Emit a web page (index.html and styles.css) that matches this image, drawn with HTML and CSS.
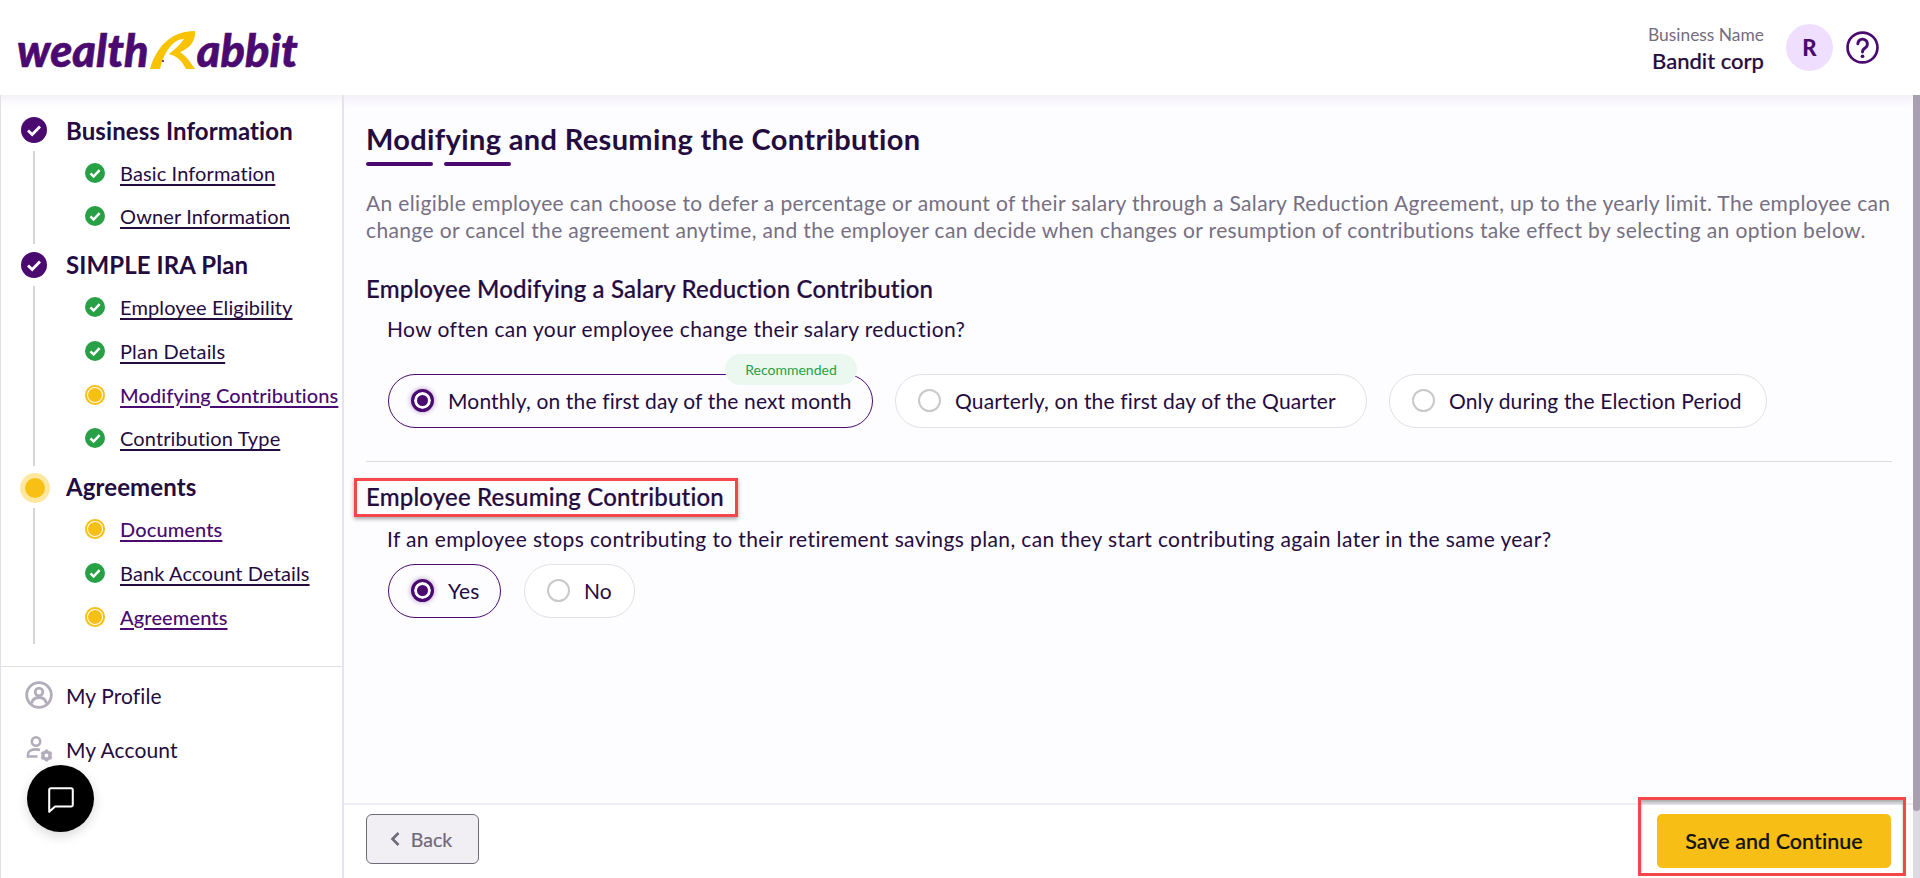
FILE: index.html
```html
<!DOCTYPE html>
<html lang="en">
<head>
<meta charset="utf-8">
<title>WealthRabbit</title>
<link rel="stylesheet" href="styles.css">
</head>
<body>
<div class="page">
  <header class="topbar">
    <div class="logo">
      <span class="logo-word">wealth</span>
      <svg class="logo-r" viewBox="0 0 48 40"><path d="M1 39C7 18 21 1 46 1C47 11 40 19 31 22C37 26 42 33 46 39H37C33 31 28 26 20 24C25 20 31 15 35 9C24 9 15 22 11 39Z" fill="#f9c301"/><circle cx="14" cy="31" r="1" fill="#4a0a70"/></svg>
      <span class="logo-word">abbit</span>
    </div>
    <div class="account">
      <div class="biz"><span class="biz-label">Business Name</span><span class="biz-name">Bandit corp</span></div>
      <div class="avatar">R</div>
      <svg class="help" viewBox="0 0 32 32"><circle cx="16" cy="16" r="14.500" fill="none" stroke="#4a0a70" stroke-width="2.600"/><path d="M11.500 12.500a4.600 4.600 0 1 1 7.200 3.800c-1.700 1.100-2.700 2-2.700 4" fill="none" stroke="#4a0a70" stroke-width="2.800" stroke-linecap="round"/><circle cx="16" cy="24.500" r="1.800" fill="#4a0a70"/></svg>
    </div>
  </header>
  <div class="body">
    <aside class="sidebar">
      <nav class="steps">
        <section class="group">
          <h3 class="group-title"><span class="dot-big done"><svg viewBox="0 0 24 24"><path d="M6 12.500l4.200 4L18 8.500"/></svg></span>Business Information</h3>
          <ul class="sub">
            <li><span class="dot ok"><svg viewBox="0 0 24 24"><path d="M6.500 12.500l3.800 3.700L17.500 8.500"/></svg></span><a>Basic Information</a></li>
            <li><span class="dot ok"><svg viewBox="0 0 24 24"><path d="M6.500 12.500l3.800 3.700L17.500 8.500"/></svg></span><a>Owner Information</a></li>
          </ul>
        </section>
        <section class="group">
          <h3 class="group-title"><span class="dot-big done"><svg viewBox="0 0 24 24"><path d="M6 12.500l4.200 4L18 8.500"/></svg></span>SIMPLE IRA Plan</h3>
          <ul class="sub">
            <li><span class="dot ok"><svg viewBox="0 0 24 24"><path d="M6.500 12.500l3.800 3.700L17.500 8.500"/></svg></span><a>Employee Eligibility</a></li>
            <li><span class="dot ok"><svg viewBox="0 0 24 24"><path d="M6.500 12.500l3.800 3.700L17.500 8.500"/></svg></span><a>Plan Details</a></li>
            <li><span class="dot pending"></span><a class="active">Modifying Contributions</a></li>
            <li><span class="dot ok"><svg viewBox="0 0 24 24"><path d="M6.500 12.500l3.800 3.700L17.500 8.500"/></svg></span><a>Contribution Type</a></li>
          </ul>
        </section>
        <section class="group">
          <h3 class="group-title"><span class="dot-big current"></span>Agreements</h3>
          <ul class="sub">
            <li><span class="dot pending"></span><a class="active">Documents</a></li>
            <li><span class="dot ok"><svg viewBox="0 0 24 24"><path d="M6.500 12.500l3.800 3.700L17.500 8.500"/></svg></span><a>Bank Account Details</a></li>
            <li><span class="dot pending"></span><a class="active">Agreements</a></li>
          </ul>
        </section>
      </nav>
      <div class="side-links">
        <div class="side-link">
          <svg class="side-icon" viewBox="0 0 28 28"><circle cx="14" cy="14" r="12.300" fill="none" stroke="#b3adbb" stroke-width="2.800"/><circle cx="14" cy="11" r="3.800" fill="none" stroke="#b3adbb" stroke-width="2.800"/><path d="M6.500 22.500c1-4.500 4-6 7.500-6s6.500 1.500 7.500 6" fill="none" stroke="#b3adbb" stroke-width="2.800"/></svg>
          My Profile
        </div>
        <div class="side-link">
          <svg class="side-icon" viewBox="0 0 28 28"><circle cx="11" cy="6.500" r="4.200" fill="none" stroke="#b3adbb" stroke-width="2.600"/><path d="M15 15c-1.300-.4-2.600-.6-4-.6-4.500 0-8 2-8 4.500v2.600h9.500" fill="none" stroke="#b3adbb" stroke-width="2.600"/><circle cx="21.500" cy="20.500" r="3.600" fill="none" stroke="#b3adbb" stroke-width="3.400"/><path d="M21.500 14.500v2.500M21.500 24v2.500M16.300 17.500l2 1.100M24.700 22.400l2 1.100M16.300 23.500l2-1.100M24.700 18.600l2-1.100" stroke="#b3adbb" stroke-width="2.800"/></svg>
          My Account
        </div>
      </div>
      <button class="chat" aria-label="Chat"><svg viewBox="0 0 28 28"><path d="M3 5.500a1.500 1.500 0 0 1 1.500-1.500h19a1.500 1.500 0 0 1 1.500 1.500v14a1.500 1.500 0 0 1-1.500 1.500H8.500L3 26Z" fill="none" stroke="#fff" stroke-width="1.900" stroke-linejoin="round"/></svg></button>
    </aside>
    <main class="main">
      <div class="content">
        <h1 class="title">Modifying and Resuming the Contribution</h1>
        <div class="bars"><span class="bar"></span><span class="bar"></span></div>
        <p class="intro">An eligible employee can choose to defer a percentage or amount of their salary through a Salary Reduction Agreement, up to the yearly limit. The employee can change or cancel the agreement anytime, and the employer can decide when changes or resumption of contributions take effect by selecting an option below.</p>
        <h2 class="sec-title">Employee Modifying a Salary Reduction Contribution</h2>
        <p class="question">How often can your employee change their salary reduction?</p>
        <div class="options">
          <label class="pill selected opt-monthly"><span class="radio on"></span>Monthly, on the first day of the next month<span class="badge">Recommended</span></label>
          <label class="pill opt-quarterly"><span class="radio"></span>Quarterly, on the first day of the Quarter</label>
          <label class="pill opt-election"><span class="radio"></span>Only during the Election Period</label>
        </div>
        <hr class="rule">
        <h2 class="sec-title second"><span class="flagged">Employee Resuming Contribution</span></h2>
        <p class="question q2">If an employee stops contributing to their retirement savings plan, can they start contributing again later in the same year?</p>
        <div class="options tight">
          <label class="pill selected opt-yes"><span class="radio on"></span>Yes</label>
          <label class="pill opt-no"><span class="radio"></span>No</label>
        </div>
      </div>
      <footer class="footer">
        <button class="back"><svg viewBox="0 0 12 16"><path d="M9.500 2L3.500 8L9.500 14"/></svg>Back</button>
        <div class="save-wrap"><button class="save">Save and Continue</button></div>
      </footer>
    </main>
    <div class="scrollbar"><span class="thumb"></span></div>
  </div>
</div>
</body>
</html>
```
FILE: styles.css
```css
* { box-sizing: border-box; }
html, body { margin: 0; height: 100%; overflow: hidden; }
body { font-family: "Lato", "Noto Sans", sans-serif; color: #250c3f; background: #fff; }
h1, h2, h3, p, ul { margin: 0; padding: 0; }
ul { list-style: none; }
button { font-family: inherit; cursor: pointer; }

.page { height: 878px; display: flex; flex-direction: column; }

.topbar { height: 95px; flex: none; display: flex; justify-content: space-between; align-items: center; padding: 0 41px 0 17px; background: #fff; position: relative; z-index: 2; }
.logo { display: flex; align-items: flex-end; height: 42px; margin-top: 3px; }
.logo-word { font-weight: 900; font-style: italic; font-size: 45px; line-height: 40px; letter-spacing: 0.1px; color: #4a0a70; -webkit-text-stroke: 0.6px #4a0a70; }
.logo-r { width: 48px; height: 40px; flex: none; }
.account { display: flex; align-items: center; }
.biz { display: flex; flex-direction: column; align-items: flex-end; margin: 3px 22px 0 0; }
.biz-label { font-size: 17.400px; line-height: 24px; color: #756c80; }
.biz-name { font-size: 22px; line-height: 28px; font-weight: 500; color: #250c3f; -webkit-text-stroke: 0.2px #250c3f; }
.avatar { width: 47px; height: 47px; border-radius: 50%; background: #f0deff; color: #4a0a70; display: flex; align-items: center; justify-content: center; font-size: 22px; font-weight: 900; margin-right: 13px; }
.help { width: 33px; height: 33px; }

.body { flex: 1; display: flex; min-height: 0; }
.sidebar { width: 344px; flex: none; background: #fff; border-left: 1px solid #e3e0ea; border-right: 2px solid #e6e2ee; display: flex; flex-direction: column; position: relative; box-shadow: inset 0 14px 12px -10px #f0edf5; padding-top: 20px; }
.steps { display: flex; flex-direction: column; height: 552px; flex: none; border-bottom: 1px solid #e0dfe4; }
.group { flex: none; margin-bottom: 5.500px; }
.group-title { display: flex; align-items: center; height: 30px; font-size: 24px; font-weight: 700; letter-spacing: 0.1px; color: #250c3f; margin-bottom: 6px; }
.dot-big { width: 26px; height: 26px; border-radius: 50%; flex: none; margin-left: 20px; margin-right: 19px; display: flex; align-items: center; justify-content: center; }
.dot-big.done { background: #4a0a70; }
.dot-big.done svg { width: 24px; height: 24px; fill: none; stroke: #fff; stroke-width: 2.800; }
.dot-big.current { width: 20px; height: 20px; background: #f8c014; box-shadow: 0 0 0 5px #fee79f; margin-left: 24px; margin-right: 21px; margin-top: 2px; }
.sub { margin-left: 32px; border-left: 2px solid #d6d5d9; padding-bottom: 6px; }
.sub li { display: flex; align-items: center; height: 43.600px; padding-left: 50px; }
.dot { width: 20px; height: 20px; border-radius: 50%; flex: none; margin-right: 15px; display: flex; align-items: center; justify-content: center; }
.dot.ok { background: #28a045; }
.dot.ok svg { width: 20px; height: 20px; fill: none; stroke: #fff; stroke-width: 3; }
.dot.pending { background: #f8c014; box-shadow: inset 0 0 0 2px #f8c014, inset 0 0 0 3px #fff; }
.sub a { font-size: 20px; line-height: 26px; letter-spacing: 0.12px; color: #250c3f; text-decoration: underline; text-underline-offset: 3px; white-space: nowrap; }
.sub a.active { color: #4a0a70; font-weight: 500; }

.side-links { display: flex; flex-direction: column; gap: 24px; padding-top: 13px; }
.side-link { display: flex; align-items: center; height: 30px; font-size: 21px; letter-spacing: 0.1px; color: #250c3f; }
.side-icon { width: 28px; height: 28px; margin-left: 24px; margin-right: 13px; flex: none; }
.chat { position: absolute; left: 26px; top: 670px; width: 67px; height: 67px; border-radius: 50%; border: 0; background: #000; box-shadow: 0 4px 12px rgba(0,0,0,.15); display: flex; align-items: center; justify-content: center; padding: 0; z-index: 3; }
.chat svg { width: 30px; height: 30px; }

.main { flex: 1; min-width: 0; display: flex; flex-direction: column; background: #fdfcff; }
.content { flex: 1; padding: 27px 21px 0 22px; box-shadow: inset 0 14px 12px -10px #f0edf5; }
.title { font-size: 29px; line-height: 34px; font-weight: 700; letter-spacing: 0.35px; color: #250c3f; }
.bars { display: flex; gap: 11px; margin-top: 6px; }
.bar { width: 67px; height: 4px; border-radius: 2px; background: #4a0a70; display: block; }
.intro { margin-top: 23px; font-size: 21px; line-height: 27px; letter-spacing: 0.36px; color: #757082; }
.sec-title { margin-top: 31px; font-size: 24px; line-height: 30px; font-weight: 500; letter-spacing: 0.18px; color: #250c3f; -webkit-text-stroke: 0.2px #250c3f; }
.question { margin: 11px 0 0 21px; font-size: 21px; line-height: 27px; letter-spacing: 0.38px; color: #250c3f; }
.options { display: flex; gap: 22px; margin: 32px 0 0 22px; }
.options.tight { gap: 23px; margin-top: 12px; }
.pill { height: 54px; border-radius: 27px; border: 1px solid #e2e0e8; background: #fff; display: flex; align-items: center; padding: 0 0 2px 22px; font-size: 21px; letter-spacing: 0.15px; color: #250c3f; position: relative; white-space: nowrap; }
.pill.selected { border-color: #4a0a70; background: transparent; }
.opt-monthly { width: 485px; }
.opt-quarterly { width: 472px; }
.opt-election { width: 378px; }
.opt-yes { width: 113px; }
.opt-no { width: 111px; }
.radio { width: 23px; height: 23px; border-radius: 50%; border: 2px solid #c9c8cc; margin-right: 14px; flex: none; background: #fff; }
.radio.on { border: 3px solid #4a0a70; background: #4a0a70; box-shadow: inset 0 0 0 3px #fff, 0 0 4px 1px rgba(74,10,112,.3); }
.badge { position: absolute; left: 336px; top: -21px; width: 132px; height: 31px; border-radius: 16px; background: #ebf8ef; color: #28a045; font-size: 14px; letter-spacing: 0; display: flex; align-items: center; justify-content: center; }
.rule { border: 0; border-top: 1px solid #dcdbe0; margin: 33px 0 0 0; }
.sec-title.second { margin-top: 20px; }
.flagged { position: relative; display: inline-block; }
.flagged::after { content: ""; position: absolute; left: -12px; right: -14px; top: -4px; bottom: -5px; border: 3px solid #f5474b; box-shadow: 0 2px 4px rgba(0,0,0,.35); pointer-events: none; }
.q2 { margin-top: 13px; }

.footer { height: 75px; flex: none; background: #fff; border-top: 2px solid #f0eef4; display: flex; justify-content: space-between; align-items: flex-start; padding: 9px 22px 0 22px; }
.back { width: 113px; height: 50px; border-radius: 6px; border: 1px solid #6e6a76; background: #f2eff4; color: #6f6a7a; font-size: 19.500px; -webkit-text-stroke: 0.2px #6f6a7a; display: flex; align-items: center; justify-content: center; gap: 10px; padding: 0 4px 0 0; }
.back svg { width: 12px; height: 16px; fill: none; stroke: #6f6a7a; stroke-width: 2.600; }
.save-wrap { position: relative; height: 54px; }
.save-wrap::after { content: ""; position: absolute; left: -19px; right: -15px; top: -17px; bottom: -8px; border: 3px solid #f5474b; box-shadow: inset 0 3px 3px rgba(0,0,0,.3); pointer-events: none; }
.save { display: block; width: 234px; height: 54px; border-radius: 5px; border: 0; background: #f7bf15; color: #111; font-size: 21.500px; font-weight: 500; letter-spacing: 0.05px; -webkit-text-stroke: 0.2px #111; padding: 0; }

.scrollbar { width: 7px; flex: none; background: #dedae2; position: relative; }
.thumb { position: absolute; left: 0; right: 0; top: -93px; height: 809px; background: #a8a0b0; border-radius: 3px; }
```
